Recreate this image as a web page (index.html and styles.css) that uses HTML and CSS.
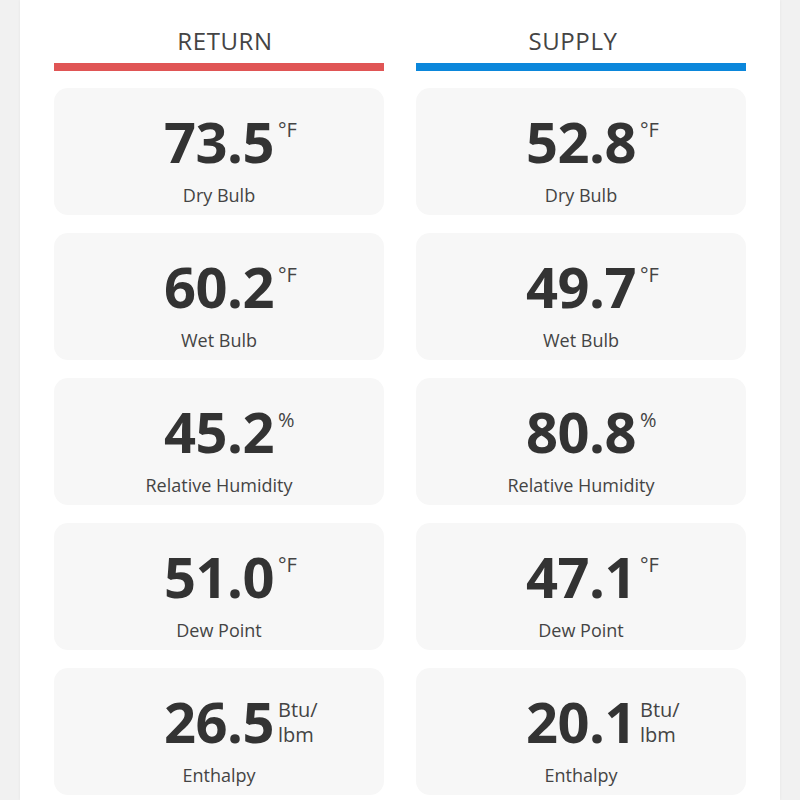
FILE: index.html
```html
<!DOCTYPE html>
<html>
<head>
<meta charset="utf-8">
<link rel="stylesheet" href="styles.css">
</head>
<body>
<div class="panel">
  <div class="columns">
    <section class="col">
      <h2 class="col-title col-title-return">RETURN</h2>
      <div class="bar bar-return"></div>
      <div class="cards">
        <div class="card"><div class="reading"><span class="num">73.5<span class="unit">°F</span></span></div><div class="label">Dry Bulb</div></div>
        <div class="card"><div class="reading"><span class="num">60.2<span class="unit">°F</span></span></div><div class="label">Wet Bulb</div></div>
        <div class="card"><div class="reading"><span class="num">45.2<span class="unit">%</span></span></div><div class="label">Relative Humidity</div></div>
        <div class="card"><div class="reading"><span class="num">51.0<span class="unit">°F</span></span></div><div class="label">Dew Point</div></div>
        <div class="card"><div class="reading"><span class="num">26.5<span class="unit">Btu/<br>lbm</span></span></div><div class="label">Enthalpy</div></div>
      </div>
    </section>
    <section class="col">
      <h2 class="col-title col-title-supply">SUPPLY</h2>
      <div class="bar bar-supply"></div>
      <div class="cards">
        <div class="card"><div class="reading"><span class="num">52.8<span class="unit">°F</span></span></div><div class="label">Dry Bulb</div></div>
        <div class="card"><div class="reading"><span class="num">49.7<span class="unit">°F</span></span></div><div class="label">Wet Bulb</div></div>
        <div class="card"><div class="reading"><span class="num">80.8<span class="unit">%</span></span></div><div class="label">Relative Humidity</div></div>
        <div class="card"><div class="reading"><span class="num">47.1<span class="unit">°F</span></span></div><div class="label">Dew Point</div></div>
        <div class="card"><div class="reading"><span class="num">20.1<span class="unit">Btu/<br>lbm</span></span></div><div class="label">Enthalpy</div></div>
      </div>
    </section>
  </div>
</div>
</body>
</html>
```

FILE: styles.css
```css
* { box-sizing: border-box; }
html, body {
  margin: 0;
  padding: 0;
  background: #f1f1f1;
  font-family: "Open Sans", "Liberation Sans", sans-serif;
  color: #333;
  height: 800px;
  overflow: hidden;
}
.panel {
  margin: 0 20px;
  background: #fff;
  min-height: 800px;
  padding: 0 34px;
  box-shadow: 0 0 3px rgba(0,0,0,0.06);
}
.columns {
  display: grid;
  grid-template-columns: 1fr 1fr;
  column-gap: 32px;
}
.col-title {
  margin: 0;
  padding-top: 25px;
  font-size: 24px;
  line-height: 32px;
  font-weight: 400;
  letter-spacing: 0.6px;
  color: #444;
  text-align: center;
}
.col-title-return { padding-left: 12px; }
.col-title-supply { padding-right: 16px; }
.bar {
  margin-top: 6px;
  height: 8px;
}
.bar-return { background: #e05555; }
.bar-supply { background: #0b87db; }
.cards {
  margin-top: 17px;
  display: flex;
  flex-direction: column;
  gap: 18px;
}
.card {
  height: 127px;
  background: #f7f7f7;
  border-radius: 14px;
  padding-top: 25px;
  display: flex;
  flex-direction: column;
  align-items: center;
}
.reading {
  display: flex;
  justify-content: center;
}
.num {
  position: relative;
  font-size: 56px;
  line-height: 56px;
  font-weight: 700;
  color: #333;
  letter-spacing: -0.5px;
}
.unit {
  position: absolute;
  left: 100%;
  top: 4px;
  margin-left: 4px;
  font-size: 20px;
  line-height: 25px;
  letter-spacing: 0;
  color: #444;
  font-weight: 400;
  white-space: nowrap;
}
.label {
  margin-top: 16px;
  font-size: 18px;
  line-height: 20px;
  color: #444;
}
```
